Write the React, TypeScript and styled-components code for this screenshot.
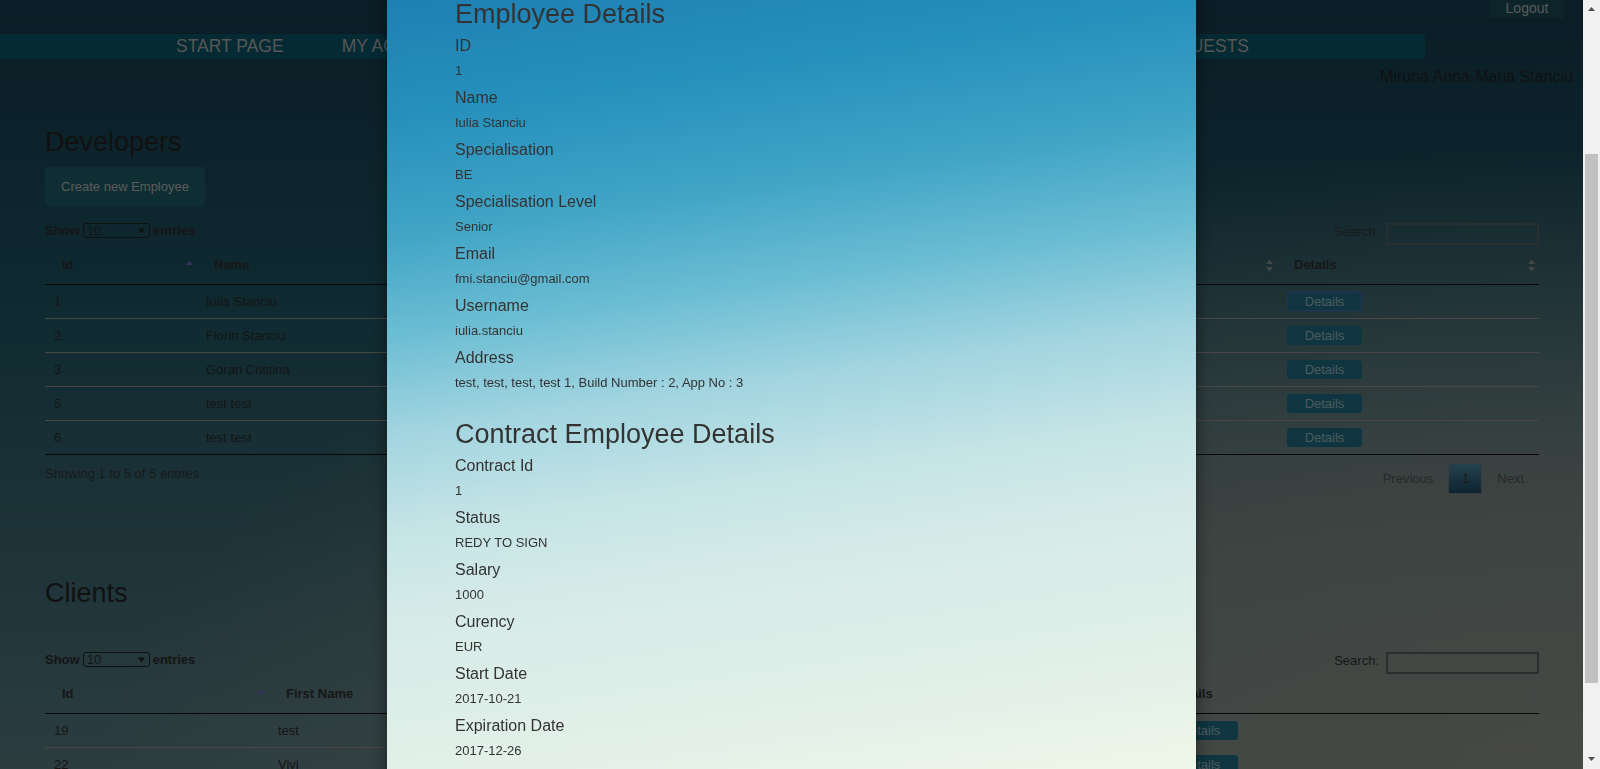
import React, { useLayoutEffect, useRef } from "react";
import styled, { createGlobalStyle } from "styled-components";

const GlobalStyle = createGlobalStyle`
  html, body { margin: 0; padding: 0; height: 100%; overflow: hidden; }
  body { font-family: "Liberation Sans", Arial, sans-serif; color: #333; }
  *, *::before, *::after { box-sizing: border-box; }
`;

const Page = styled.div`
  height: 100vh;
  overflow: hidden;
  background:
    radial-gradient(ellipse 110% 95% at 100% 100%, #8c928a 0%, rgba(140,146,138,0.75) 40%, rgba(140,146,138,0) 85%),
    linear-gradient(to bottom, #163a4c 0%, #1e5462 40%, #587a80 100%);
`;

const TopBar = styled.div`
  height: 34px;
  display: flex;
  justify-content: flex-end;
  align-items: flex-start;
  padding-right: 36px;
`;

const LogoutButton = styled.div`
  width: 74px;
  height: 18px;
  background: #1a4a54;
  color: #b4b4b4;
  font-size: 14px;
  line-height: 17px;
  text-align: center;
`;

const NavBar = styled.nav`
  width: 1425px;
  height: 25px;
  background: #0a5466;
  display: flex;
  align-items: center;
  gap: 58px;
  padding: 0 176px;
`;

const NavItem = styled.span<{ $last?: boolean }>`
  font-size: 17.5px;
  color: #acacac;
  text-transform: uppercase;
  white-space: nowrap;
  margin-left: ${(p) => (p.$last ? "auto" : "0")};
`;

const UserLine = styled.div`
  padding: 8px 27px 0 0;
  height: 28px;
  text-align: right;
  font-size: 16px;
  line-height: 20px;
  color: #222;
`;

const Main = styled.main`
  padding: 0 61px 0 45px;
`;

const SectionTitle = styled.h2<{ $top: number }>`
  margin: ${(p) => p.$top}px 0 0;
  font-size: 27px;
  line-height: 30px;
  font-weight: 400;
  color: #222;
`;

const CreateButton = styled.div`
  margin-top: 10px;
  width: 160px;
  height: 39px;
  border-radius: 3px;
  background: #1e5c66;
  color: #b4b4b4;
  font-size: 13px;
  line-height: 39px;
  text-align: center;
`;

const Toolbar = styled.div<{ $top: number }>`
  margin-top: ${(p) => p.$top}px;
  display: flex;
  justify-content: space-between;
  align-items: flex-start;
  height: 22px;
`;

const LengthLabel = styled.div`
  display: flex;
  align-items: center;
  gap: 3px;
  font-size: 13px;
  font-weight: 700;
  line-height: 15px;
  color: #2a2a2a;
`;

const FakeSelect = styled.div`
  width: 67px;
  height: 15px;
  border: 1px solid #222;
  border-radius: 3px;
  display: flex;
  align-items: center;
  justify-content: space-between;
  padding: 0 4px 0 3px;
  font-size: 13px;
  font-weight: 400;
  color: #2a2a2a;
`;

const SearchBox = styled.div`
  display: flex;
  align-items: flex-start;
  gap: 7px;
  font-size: 13px;
  line-height: 18px;
  color: #333;
`;

const SearchInput = styled.div`
  width: 153px;
  height: 22px;
  border: 2px solid #4e5e5e;
`;

const Grid = styled.div<{ $cols: string }>`
  display: grid;
  grid-template-columns: ${(p) => p.$cols};
`;

const HeaderRow = styled(Grid)`
  border-bottom: 1px solid #111;
`;

const HeaderCell = styled.div`
  display: flex;
  justify-content: space-between;
  align-items: center;
  padding: 11px 4px 10px 17px;
  font-size: 13px;
  line-height: 18px;
  font-weight: 700;
  color: #2e2e2e;
  white-space: nowrap;
`;

const BodyRow = styled(Grid)<{ $last?: boolean }>`
  height: 34px;
  border-bottom: 1px solid ${(p) => (p.$last ? "#111" : "#958d8d")};
  align-items: center;
`;

const Cell = styled.div`
  padding: 0 9px;
  font-size: 13px;
  color: #2a2a2a;
  white-space: nowrap;
  overflow: hidden;
`;

const DetailsButton = styled.div<{ $focus?: boolean }>`
  width: 75px;
  height: 19px;
  border-radius: 3px;
  background: #1e6c80;
  border: 1px solid ${(p) => (p.$focus ? "#3a66b8" : "#1e6c80")};
  color: #9ab4bc;
  font-size: 13px;
  line-height: 17px;
  text-align: center;
  margin-left: 1px;
`;

const InfoRow = styled.div`
  margin-top: 8px;
  display: flex;
  justify-content: space-between;
  align-items: flex-start;
  height: 31px;
`;

const InfoText = styled.div`
  font-size: 13px;
  line-height: 22px;
  color: #333;
`;

const Pagination = styled.div`
  display: flex;
  align-items: center;
  font-size: 13px;
  color: #505050;
`;

const PageLink = styled.span`
  padding: 0 15px;
`;

const CurrentPage = styled.span`
  width: 34px;
  height: 31px;
  border: 1px solid #777;
  background: linear-gradient(to bottom, #4a8498 0%, #1a4a60 100%);
  color: #333;
  display: flex;
  align-items: center;
  justify-content: center;
`;

const Backdrop = styled.div`
  position: fixed;
  inset: 0;
  background: rgba(0, 0, 0, 0.5);
`;

const ModalLayer = styled.div`
  position: fixed;
  inset: 0;
  display: flex;
`;

const ModalViewport = styled.div`
  flex: 1;
  overflow: hidden;
`;

const ScrollBar = styled.div`
  width: 17px;
  background: #f1f1f1;
  display: flex;
  flex-direction: column;
`;

const ScrollArrow = styled.div<{ $pad: number }>`
  height: 17px;
  display: flex;
  justify-content: center;
  align-items: flex-start;
  padding-top: ${(p) => p.$pad}px;
`;

const ScrollTrack = styled.div`
  flex: 1;
  padding: 0 2px;
`;

const ScrollThumb = styled.div<{ $offset: number; $size: number }>`
  margin-top: ${(p) => p.$offset}px;
  height: ${(p) => p.$size}px;
  background: #c1c1c1;
`;

const Dialog = styled.div`
  width: 809px;
  margin: 30px auto;
  padding: 168px 68px 71px;
  box-shadow: 0 5px 15px rgba(0, 0, 0, 0.5);
  background: linear-gradient(
    172deg,
    #1770a6 0%,
    #1e82b4 15.9%,
    #2690bc 25.5%,
    #3ea3c5 35.5%,
    #6bbdd3 45%,
    #a3d5e0 54%,
    #c5e4e6 62.5%,
    #d6ebe8 70.5%,
    #e2f0e8 84.4%,
    #eef6e8 93%,
    #f0f7ea 100%
  );
`;

const ModalTitle = styled.h3<{ $spaced?: boolean }>`
  margin: ${(p) => (p.$spaced ? "19px" : "0")} 0 7px;
  font-size: 27px;
  line-height: 30px;
  font-weight: 400;
  color: #333;
`;

const Field = styled.div`
  padding-bottom: 8px;
`;

const FieldLabel = styled.div`
  font-size: 16px;
  line-height: 20px;
  color: #333;
`;

const FieldValue = styled.div`
  margin-top: 6px;
  font-size: 13px;
  line-height: 18px;
  color: #333;
`;

const SortIcon = ({ kind }: { kind: "asc" | "both" }) =>
  kind === "asc" ? (
    <svg width="7" height="13" viewBox="0 0 7 13">
      <path d="M0 6 L3.5 2 L7 6 Z" fill="#6a62c4" />
    </svg>
  ) : (
    <svg width="7" height="13" viewBox="0 0 7 13">
      <path d="M0 5 L3.5 0.5 L7 5 Z M0 8 L3.5 12.5 L7 8 Z" fill="#8a8a8a" />
    </svg>
  );

const SelectArrow = () => (
  <svg width="7" height="6" viewBox="0 0 7 6">
    <path d="M0 0.5 L7 0.5 L3.5 5.5 Z" fill="#222" />
  </svg>
);

const Triangle = ({ up }: { up: boolean }) => (
  <svg width="7" height="4" viewBox="0 0 7 4">
    <path d={up ? "M0 4 L3.5 0 L7 4 Z" : "M0 0 L7 0 L3.5 4 Z"} fill="#505050" />
  </svg>
);

type Column = { title: string; sort: "asc" | "both" | null };

const DataTable = ({
  cols,
  columns,
  rows,
  focusFirst,
}: {
  cols: string;
  columns: Column[];
  rows: string[][];
  focusFirst?: boolean;
}) => (
  <div>
    <HeaderRow $cols={cols}>
      {columns.map((c, i) => (
        <HeaderCell key={i}>
          <span>{c.title}</span>
          {c.sort && <SortIcon kind={c.sort} />}
        </HeaderCell>
      ))}
    </HeaderRow>
    {rows.map((r, i) => (
      <BodyRow key={r[0]} $cols={cols} $last={i === rows.length - 1}>
        {r.map((v, j) => (
          <Cell key={j}>{v}</Cell>
        ))}
        <Cell>
          <DetailsButton $focus={focusFirst && i === 0}>Details</DetailsButton>
        </Cell>
      </BodyRow>
    ))}
  </div>
);

/* Columns under the modal keep their place but show no text there. */
const devColumns: Column[] = [
  { title: "Id", sort: "asc" },
  { title: "Name", sort: "both" },
  { title: "", sort: "both" },
  { title: "", sort: "both" },
  { title: "", sort: "both" },
  { title: "Details", sort: "both" },
];

const devRows = [
  ["1", "Iulia Stanciu", "", "", ""],
  ["2", "Florin Stanciu", "", "", ""],
  ["3", "Goran Cristina", "", "", ""],
  ["5", "test test", "", "", ""],
  ["6", "test test", "", "", ""],
];

const clientColumns: Column[] = [
  { title: "Id", sort: "asc" },
  { title: "First Name", sort: "both" },
  { title: "", sort: "both" },
  { title: "", sort: "both" },
  { title: "Details", sort: "both" },
];

const clientRows = [
  ["19", "test", "", ""],
  ["22", "Vivi", "", ""],
  ["23", "Ana", "", ""],
];

const employeeFields = [
  ["ID", "1"],
  ["Name", "Iulia Stanciu"],
  ["Specialisation", "BE"],
  ["Specialisation Level", "Senior"],
  ["Email", "fmi.stanciu@gmail.com"],
  ["Username", "iulia.stanciu"],
  ["Address", "test, test, test, test 1, Build Number : 2, App No : 3"],
];

const contractFields = [
  ["Contract Id", "1"],
  ["Status", "REDY TO SIGN"],
  ["Salary", "1000"],
  ["Curency", "EUR"],
  ["Start Date", "2017-10-21"],
  ["Expiration Date", "2017-12-26"],
];

const navItems = ["Start Page", "My Account", "Employees", "Clients", "Projects"];

const SCROLL_TOP = 199;
const CONTENT_HEIGHT = 1068;
const VIEW_HEIGHT = 769;
const TRACK = VIEW_HEIGHT - 34;

export default function App() {
  const viewport = useRef<HTMLDivElement>(null);
  useLayoutEffect(() => {
    if (viewport.current) viewport.current.scrollTop = SCROLL_TOP;
  }, []);

  const thumbSize = Math.round((TRACK * VIEW_HEIGHT) / CONTENT_HEIGHT);
  const thumbOffset = Math.round((TRACK * SCROLL_TOP) / CONTENT_HEIGHT);

  return (
    <>
      <GlobalStyle />
      <Page>
        <TopBar>
          <LogoutButton>Logout</LogoutButton>
        </TopBar>
        <NavBar>
          {navItems.map((n) => (
            <NavItem key={n}>{n}</NavItem>
          ))}
          <NavItem $last>Holiday Requests</NavItem>
        </NavBar>
        <UserLine>Miruna Anna-Maria Stanciu</UserLine>
        <Main>
          <SectionTitle $top={40}>Developers</SectionTitle>
          <CreateButton>Create new Employee</CreateButton>
          <Toolbar $top={17}>
            <LengthLabel>
              Show
              <FakeSelect>
                10
                <SelectArrow />
              </FakeSelect>
              entries
            </LengthLabel>
            <SearchBox>
              Search:
              <SearchInput />
            </SearchBox>
          </Toolbar>
          <DataTable
            cols="152px 300px 420px 200px 160px 262px"
            columns={devColumns}
            rows={devRows}
            focusFirst
          />
          <InfoRow>
            <InfoText>Showing 1 to 5 of 5 entries</InfoText>
            <Pagination>
              <PageLink>Previous</PageLink>
              <CurrentPage>1</CurrentPage>
              <PageLink>Next</PageLink>
            </Pagination>
          </InfoRow>

          <SectionTitle $top={84}>Clients</SectionTitle>
          <Toolbar $top={44}>
            <LengthLabel>
              Show
              <FakeSelect>
                10
                <SelectArrow />
              </FakeSelect>
              entries
            </LengthLabel>
            <SearchBox>
              Search:
              <SearchInput />
            </SearchBox>
          </Toolbar>
          <DataTable cols="224px 300px 300px 284px 386px" columns={clientColumns} rows={clientRows} />
        </Main>
      </Page>
      <Backdrop />
      <ModalLayer>
        <ModalViewport ref={viewport}>
          <Dialog>
            <ModalTitle>Employee Details</ModalTitle>
            {employeeFields.map(([l, v]) => (
              <Field key={l}>
                <FieldLabel>{l}</FieldLabel>
                <FieldValue>{v}</FieldValue>
              </Field>
            ))}
            <ModalTitle $spaced>Contract Employee Details</ModalTitle>
            {contractFields.map(([l, v]) => (
              <Field key={l}>
                <FieldLabel>{l}</FieldLabel>
                <FieldValue>{v}</FieldValue>
              </Field>
            ))}
          </Dialog>
        </ModalViewport>
        <ScrollBar>
          <ScrollArrow $pad={7}>
            <Triangle up />
          </ScrollArrow>
          <ScrollTrack>
            <ScrollThumb $offset={thumbOffset} $size={thumbSize} />
          </ScrollTrack>
          <ScrollArrow $pad={5}>
            <Triangle up={false} />
          </ScrollArrow>
        </ScrollBar>
      </ModalLayer>
    </>
  );
}
